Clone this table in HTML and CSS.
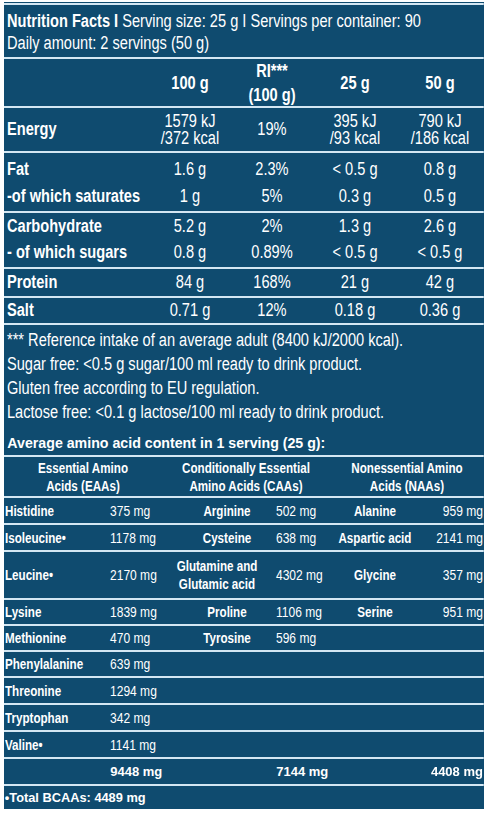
FILE: index.html
```html
<!DOCTYPE html>
<html lang="en">
<head>
<meta charset="utf-8">
<title>Nutrition Facts</title>
<link rel="stylesheet" href="styles.css">
</head>
<body>
<div class="frame">
<div class="panel">
  <div class="rule"></div>
  <div class="intro"><b>Nutrition Facts I</b> Serving size: 25 g I Servings per container: 90<br>Daily amount: 2 servings (50 g)</div>

  <div class="nrow head">
    <span></span><span>100 g</span><span class="ri">RI***<br>(100 g)</span><span>25 g</span><span>50 g</span>
  </div>
  <div class="nrow energy">
    <span class="lbl">Energy</span><span>1579 kJ<br>/372 kcal</span><span>19%</span><span>395 kJ<br>/93 kcal</span><span>790 kJ<br>/186 kcal</span>
  </div>
  <div class="group fat">
    <div class="nrow line"><span class="lbl">Fat</span><span>1.6 g</span><span>2.3%</span><span>&lt; 0.5 g</span><span>0.8 g</span></div>
    <div class="nrow line"><span class="lbl">-of which saturates</span><span>1 g</span><span>5%</span><span>0.3 g</span><span>0.5 g</span></div>
  </div>
  <div class="group carb">
    <div class="nrow line"><span class="lbl">Carbohydrate</span><span>5.2 g</span><span>2%</span><span>1.3 g</span><span>2.6 g</span></div>
    <div class="nrow line"><span class="lbl">- of which sugars</span><span>0.8 g</span><span>0.89%</span><span>&lt; 0.5 g</span><span>&lt; 0.5 g</span></div>
  </div>
  <div class="nrow single protein"><span class="lbl">Protein</span><span>84 g</span><span>168%</span><span>21 g</span><span>42 g</span></div>
  <div class="nrow single salt"><span class="lbl">Salt</span><span>0.71 g</span><span>12%</span><span>0.18 g</span><span>0.36 g</span></div>

  <div class="notes">
    <p>*** Reference intake of an average adult (8400 kJ/2000 kcal).</p>
    <p>Sugar free: &lt;0.5 g sugar/100 ml ready to drink product.</p>
    <p>Gluten free according to EU regulation.</p>
    <p>Lactose free: &lt;0.1 g lactose/100 ml ready to drink product.</p>
    <h2><span class="wide">Average amino acid content in 1 serving (25 g):</span></h2>
  </div>

  <div class="arow ahead">
    <span class="span2">Essential Amino<br>Acids (EAAs)</span>
    <span class="span2">Conditionally Essential<br>Amino Acids (CAAs)</span>
    <span class="span2">Nonessential Amino<br>Acids (NAAs)</span>
  </div>
  <div class="arow r25"><span class="n1">Histidine</span><span class="v2">375 mg</span><span class="n3">Arginine</span><span class="v4">502 mg</span><span class="n5">Alanine</span><span class="v6">959 mg</span></div>
  <div class="arow r25"><span class="n1">Isoleucine•</span><span class="v2">1178 mg</span><span class="n3">Cysteine</span><span class="v4">638 mg</span><span class="n5">Aspartic acid</span><span class="v6">2141 mg</span></div>
  <div class="arow r46"><span class="n1">Leucine•</span><span class="v2">2170 mg</span><span class="n3 two">Glutamine and<br>Glutamic acid</span><span class="v4">4302 mg</span><span class="n5">Glycine</span><span class="v6">357 mg</span></div>
  <div class="arow r24"><span class="n1">Lysine</span><span class="v2">1839 mg</span><span class="n3">Proline</span><span class="v4">1106 mg</span><span class="n5">Serine</span><span class="v6">951 mg</span></div>
  <div class="arow r24"><span class="n1">Methionine</span><span class="v2">470 mg</span><span class="n3">Tyrosine</span><span class="v4">596 mg</span><span></span><span></span></div>
  <div class="arow r24"><span class="n1">Phenylalanine</span><span class="v2">639 mg</span><span></span><span></span><span></span><span></span></div>
  <div class="arow r25"><span class="n1">Threonine</span><span class="v2">1294 mg</span><span></span><span></span><span></span><span></span></div>
  <div class="arow r25"><span class="n1">Tryptophan</span><span class="v2">342 mg</span><span></span><span></span><span></span><span></span></div>
  <div class="arow r25"><span class="n1">Valine•</span><span class="v2">1141 mg</span><span></span><span></span><span></span><span></span></div>
  <div class="arow r25 total"><span></span><span class="v2"><span class="wide">9448 mg</span></span><span></span><span class="v4"><span class="wide">7144 mg</span></span><span></span><span class="v6"><span class="wide right">4408 mg</span></span></div>
  <div class="bcaa"><span class="wide">•Total BCAAs: 4489 mg</span></div>
</div>
</div>
</body>
</html>
```

FILE: styles.css
```css
html, body {
  margin: 0;
  padding: 0;
  background: #ffffff;
}

body {
  font-family: "Liberation Sans", Arial, sans-serif;
  color: #ffffff;
}

.frame {
  width: 480px;
  margin: 2px 0 0 4px;
  overflow: hidden;
}

/* The label is set in a condensed face: the panel is laid out in
   Arial metrics and narrowed horizontally to 83%. */
.panel {
  width: 578.31px;
  padding-top: 1px;
  background: #0f4b6f;
  box-sizing: border-box;
  transform: scaleX(0.83);
  transform-origin: 0 0;
}

/* Text set in the normal (non-condensed) width inside the panel */
.wide {
  display: inline-block;
  transform: scaleX(1.2048);
  transform-origin: 0 50%;
}

.wide.right {
  transform-origin: 100% 50%;
}

.rule {
  height: 2px;
  background: #d4e7f3;
}

.intro {
  font-size: 17.6px;
  line-height: 22px;
  padding: 5px 3.61px 3px 3.61px;
  border-bottom: 2px solid #d4e7f3;
  white-space: nowrap;
}

.intro b {
  font-weight: 700;
}

/* Nutrition table */
.nrow {
  display: grid;
  grid-template-columns: 175.9px 96.39px 101.2px 98.8px 106.02px;
  align-items: center;
  font-size: 17.6px;
  text-align: center;
  white-space: nowrap;
}

.nrow .lbl {
  text-align: left;
  padding-left: 3.61px;
  font-weight: 700;
}

.head {
  height: 47px;
  font-weight: 700;
  line-height: 24px;
  border-bottom: 2px solid #d4e7f3;
}

.energy {
  height: 43px;
  line-height: 17px;
  border-bottom: 2px solid #d4e7f3;
}

.group {
  border-bottom: 2px solid #d4e7f3;
}

.fat {
  padding: 3px 0 1px;
}

.fat .line {
  height: 27px;
}

.carb {
  padding: 0 0 2px;
}

.carb .line {
  height: 26px;
}

.single {
  border-bottom: 2px solid #d4e7f3;
}

.protein {
  height: 27px;
}

.salt {
  height: 25px;
}

/* Notes */
.notes {
  padding: 3px 3.61px 2px;
  border-bottom: 2px solid #d4e7f3;
  white-space: nowrap;
}

.notes p {
  margin: 0;
  font-size: 17.6px;
  line-height: 24px;
}

.notes h2 {
  margin: 9px 0 0;
  font-size: 14.2px;
  line-height: 20px;
  font-weight: 700;
}

/* Amino acid table */
.arow {
  display: grid;
  grid-template-columns: 125.3px 65.06px 132.53px 69.88px 108.43px 77.11px;
  align-items: center;
  font-size: 14.5px;
  border-bottom: 2px solid #d4e7f3;
  white-space: nowrap;
}

.ahead {
  height: 39px;
  font-size: 14px;
  line-height: 18px;
  font-weight: 700;
  text-align: center;
}

.ahead .span2 {
  grid-column: span 2;
}

.r25 { height: 25px; }
.r24 { height: 24px; }
.r46 { height: 46px; }

.n1 {
  font-size: 14px;
  font-weight: 700;
  padding-left: 1.2px;
}

.v2 {
  padding-left: 2.41px;
}

.n3 {
  font-size: 14px;
  font-weight: 700;
  text-align: center;
  padding-left: 24.1px;
}

.n3.two {
  padding-left: 0;
  line-height: 18px;
}

.v4 {
  padding-left: 4.82px;
}

.n5 {
  font-size: 14px;
  font-weight: 700;
  text-align: center;
}

.v6 {
  text-align: right;
  padding-right: 1.2px;
}

.total {
  font-size: 13px;
  font-weight: 700;
}

.bcaa {
  height: 23px;
  line-height: 23px;
  font-size: 12.8px;
  font-weight: 700;
  padding-left: 1.2px;
}
```
